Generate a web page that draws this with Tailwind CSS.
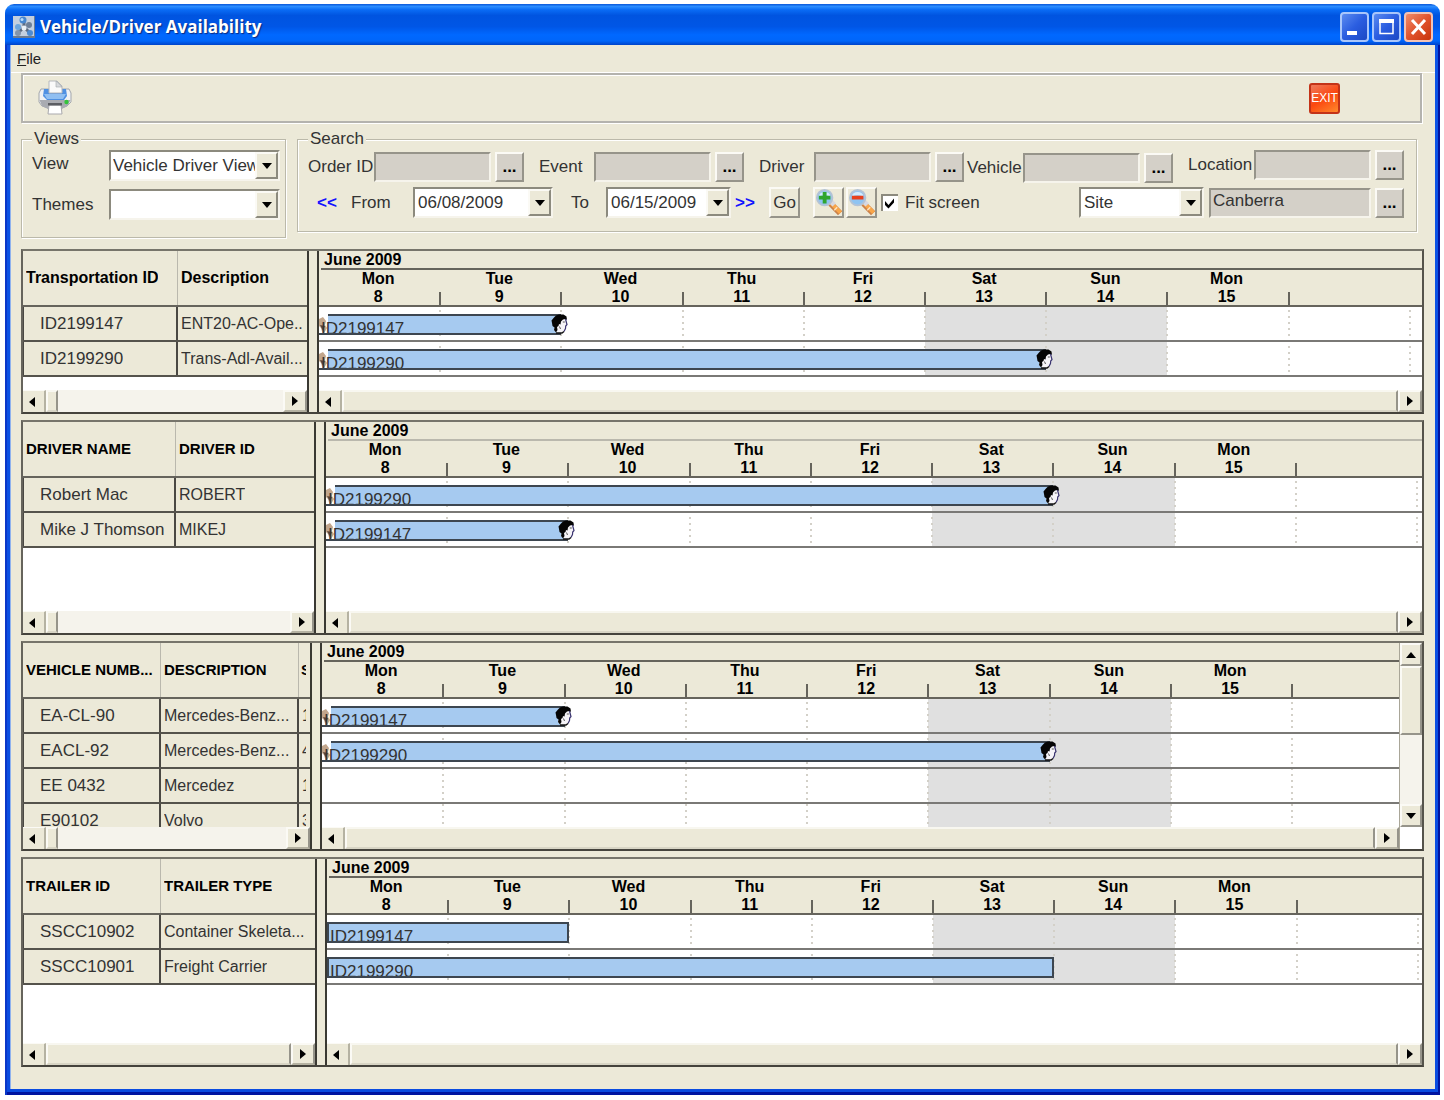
<!DOCTYPE html>
<html lang="en">
<head>
    <meta charset="UTF-8">
    <meta name="viewport" content="width=device-width, initial-scale=1.0">
    <title>Vehicle/Driver Availability</title>
    <script src="https://cdn.jsdelivr.net/npm/@tailwindcss/browser@4"></script>
</head>
<body class="bg-white pt-1 pl-[5px] pr-1 pb-[5px] font-['Liberation_Sans',Arial,sans-serif] text-[17px] leading-5 text-[#333]">

    <!-- Shared icons -->
    <svg class="hidden" aria-hidden="true">
        <symbol id="arrow-left" viewBox="0 0 6 10"><path d="M6 0v10L0 5z" fill="#000"/></symbol>
        <symbol id="arrow-right" viewBox="0 0 6 10"><path d="M0 0v10l6-5z" fill="#000"/></symbol>
        <symbol id="arrow-up" viewBox="0 0 10 6"><path d="M0 6h10L5 0z" fill="#000"/></symbol>
        <symbol id="arrow-down" viewBox="0 0 10 6"><path d="M0 0h10L5 6z" fill="#000"/></symbol>
        <symbol id="driver-head" viewBox="0 0 17 20">
            <path d="M5 3h9l2 5-.5 4-2 3-1 4H6l-3-3z" fill="#f6f4f8"/>
            <path d="M5 1.500 8 .5h4.500l3 2 .5 3.500-1.500-1-2.500.5-2 2-.5 3L8 10l-.5 2L6 13l.5 3L5 18.500 3 16l.5-2.500L1.500 12l-.5-3L.5 6.500 3 3.500z" fill="#050505"/>
            <path d="M14.500 5l.8 3 .7 2.500-1.300 1.500-.2 2.500-1.500 3" fill="none" stroke="#3a3470" stroke-width="1.200"/>
            <path d="M5 19h6l2-1.500" fill="none" stroke="#111" stroke-width="1.400"/>
            <path d="M11.800 8h2M8.500 12.500l1 2.500" stroke="#555" stroke-width="1"/>
        </symbol>
        <symbol id="zoom-base" viewBox="0 0 28 28">
            <path d="M16 15 26 25" stroke="#c9814a" stroke-width="6"/>
            <path d="M16.500 14.500 26.500 24.500" stroke="#f9a64a" stroke-width="4"/>
            <path d="M17 13.500 20 16.500" stroke="#d8d8e0" stroke-width="5"/>
            <path d="M23 19 20 22" stroke="#fde3c0" stroke-width="1.500"/>
            <circle cx="10" cy="9" r="8" fill="#8fc4f2" stroke="#b3c3d6" stroke-width="2"/>
            <path d="M4 8a6 5 0 0 1 12 0c-4-2-8-2-12 0z" fill="#d4ebfc"/>
        </symbol>
    </svg>

    <div class="overflow-hidden rounded-t-[9px]">
        <!-- Title bar -->
        <header class="flex h-[41px] items-center bg-linear-[180deg,#0a57d8_0%,#2b8dff_6%,#0a6cf5_14%,#0054e0_28%,#0056e6_55%,#0068ff_75%,#0066fa_90%,#0043c9_100%] pt-1 pr-[7px] pl-2">
            <svg class="h-[22px] w-[22px] shrink-0" viewBox="0 0 22 22">
                <rect width="22" height="22" fill="#6c7c92"/>
                <rect width="21" height="20" fill="#c3cfdf"/>
                <path d="M5 17l5-5M17 17l-5-5M11 5v7" stroke="#5d6b80" stroke-width="3"/>
                <circle cx="10" cy="4" r="3.500" fill="#4787d0"/>
                <circle cx="9" cy="3.500" r="1.500" fill="#b7dbfa"/>
                <circle cx="5" cy="11" r="3" fill="#6ba5dd"/>
                <circle cx="16" cy="9" r="3" fill="#6d7f98"/>
                <circle cx="5" cy="17" r="3" fill="#8394ab"/>
                <circle cx="17" cy="17" r="3" fill="#4d8bd2"/>
                <circle cx="11" cy="12" r="2.500" fill="#e9eff6"/>
            </svg>
            <h1 class="ml-[5px] flex-1 font-['Open_Sans',sans-serif] text-[17px] font-bold text-white [text-shadow:1px_1px_1px_#0a2a80]">Vehicle/Driver Availability</h1>
            <div class="flex gap-[3px]">
                <button aria-label="Minimize" class="h-[30px] w-[29px] rounded-[4px] border-2 border-[#a9c6fb] bg-linear-[135deg,#5b8bf0,#2a5de0_50%,#1c48c4]">
                    <svg class="h-full w-full" viewBox="0 0 25 26"><rect x="5" y="17" width="10" height="4" fill="#fff"/></svg>
                </button>
                <button aria-label="Maximize" class="h-[30px] w-[29px] rounded-[4px] border-2 border-[#a9c6fb] bg-linear-[135deg,#5b8bf0,#2a5de0_50%,#1c48c4]">
                    <svg class="h-full w-full" viewBox="0 0 25 26"><path d="M6 7.500v12h13v-12" fill="none" stroke="#fff" stroke-width="1.500"/><rect x="5" y="5" width="15" height="4" fill="#fff"/></svg>
                </button>
                <button aria-label="Close" class="h-[30px] w-[29px] rounded-[4px] border-2 border-[#f3c3b5] bg-linear-[135deg,#ef8c6c,#e0532c_50%,#c8340c]">
                    <svg class="h-full w-full" viewBox="0 0 25 26"><path d="M6 6l13 14M19 6 6 20" stroke="#fff" stroke-width="3"/></svg>
                </button>
            </div>
        </header>

        <div class="bg-linear-to-b from-[#0b53e6] to-[#0a4be0] pr-[5px] pb-[6px] pl-[5px] shadow-[inset_2px_0_0_#0a37c8,inset_-2px_-3px_0_#0014a0]">
            <div class="border-l border-[#8fb2ee] bg-[#ece9d8] pb-[22px]">
                <!-- Menu -->
                <nav class="flex h-[28px] items-center border-b border-white pl-[6px]">
                    <a href="#" class="text-[15px] leading-5 text-[#222]"><span class="underline">F</span>ile</a>
                </nav>

                <!-- Toolbar -->
                <div class="mr-[13px] ml-[10px] flex h-[50px] items-center justify-between border-2 border-[#b4b3ae] pr-[80px] pl-[15px] shadow-[inset_1px_1px_0_#fff,1px_1px_0_#fff]">
                    <button aria-label="Print">
                        <svg class="h-[36px] w-[34px]" viewBox="0 0 34 36">
                            <path d="M3 9h28l2 4v9l-4 4-5 2H10l-6-2-3-4v-9z" fill="#f0f1f3" stroke="#a3a7ad"/>
                            <path d="M1.500 20h31l-3 6-6 3H10l-6-3z" fill="#a9abb1"/>
                            <path d="M6 9h22l1 7-3 4H9l-4-4z" fill="#4f90e2"/>
                            <path d="M6 14h22l-3 5H9z" fill="#90bff2"/>
                            <path d="M11 1h8l5 5v7H11z" fill="#fafafa" stroke="#b5b8bd"/>
                            <path d="M18 1v6h6z" fill="#d7d9dc" stroke="#a3a7ad" stroke-width=".6"/>
                            <path d="M11 25h12l1 9H10z" fill="#fff" stroke="#a9a9ad"/>
                            <path d="M10 23h14v2.500H10z" fill="#5b5d63"/>
                            <circle cx="28.500" cy="22" r="2.200" fill="#35c33a"/>
                        </svg>
                    </button>
                    <button class="h-[31px] w-[31px] rounded-[3px] border-2 border-[#c33318] bg-linear-[150deg,#ee7a5c,#fb4710_50%,#ff8a2c] text-[12px] leading-5 text-white"><span class="-mx-1">EXIT</span></button>
                </div>

                <!-- Filters -->
                <div class="mt-[7px] mr-[18px] ml-[10px] flex items-start gap-[11px]">
                    <fieldset class="h-[108px] w-[265px] min-w-0 shrink-0 border border-[#bbb9aa] pr-[5px] pl-[10px] shadow-[inset_1px_1px_0_#fff,1px_1px_0_#fff]">
                        <legend class="bg-[#ece9d8] px-[2px] leading-[18px]">Views</legend>
                        <div class="flex flex-col gap-[8px] pt-[2px]">
                            <div class="flex">
                                <label for="view" class="w-[77px] pt-1">View</label>
                                <div class="flex h-[31px] min-w-0 flex-1 border-2 border-t-[#8c8a7e] border-r-[#f6f4ec] border-b-[#f6f4ec] border-l-[#8c8a7e] bg-white">
                                    <select id="view" class="w-0 min-w-0 flex-1 appearance-none overflow-hidden pl-[2px]"><option>Vehicle Driver View</option></select>
                                    <span class="flex w-[23px] shrink-0 items-center justify-center border-2 border-t-[#fbfaf5] border-r-[#8c8a7e] border-b-[#8c8a7e] border-l-[#fbfaf5] bg-[#ece9d8]"><svg class="h-[6px] w-[10px]"><use href="#arrow-down"/></svg></span>
                                </div>
                            </div>
                            <div class="flex">
                                <label for="themes" class="w-[77px] pt-[6px]">Themes</label>
                                <div class="flex h-[31px] min-w-0 flex-1 border-2 border-t-[#8c8a7e] border-r-[#f6f4ec] border-b-[#f6f4ec] border-l-[#8c8a7e] bg-white">
                                    <select id="themes" class="w-0 min-w-0 flex-1 appearance-none pl-[2px]"><option></option></select>
                                    <span class="flex w-[23px] shrink-0 items-center justify-center border-2 border-t-[#fbfaf5] border-r-[#8c8a7e] border-b-[#8c8a7e] border-l-[#fbfaf5] bg-[#ece9d8]"><svg class="h-[6px] w-[10px]"><use href="#arrow-down"/></svg></span>
                                </div>
                            </div>
                        </div>
                    </fieldset>

                    <fieldset class="h-[102px] min-w-0 flex-1 border border-[#bbb9aa] pr-[12px] pl-[10px] shadow-[inset_1px_1px_0_#fff,1px_1px_0_#fff]">
                        <legend class="bg-[#ece9d8] px-[2px] leading-[18px]">Search</legend>
                        <div class="flex flex-col gap-1 pt-[2px]">
                            <div class="flex h-[33px] items-center">
                                <div class="flex items-center">
                                    <label for="order" class="w-[66px] whitespace-nowrap">Order ID</label>
                                    <input id="order" type="text" class="h-[30px] w-[117px] border-2 border-t-[#96948a] border-r-[#f6f4ec] border-b-[#f6f4ec] border-l-[#96948a] bg-[#d4d0c8] px-[2px]">
                                    <button aria-label="Choose order" class="ml-1 flex h-[30px] w-[29px] items-end justify-center border-2 border-t-[#fbfaf5] border-r-[#96948a] border-b-[#96948a] border-l-[#fbfaf5] bg-[#d4d0c8] pb-[3px] font-bold text-black">...</button>
                                </div>
                                <div class="ml-[15px] flex items-center">
                                    <label for="event" class="w-[55px]">Event</label>
                                    <input id="event" type="text" class="h-[30px] w-[117px] border-2 border-t-[#96948a] border-r-[#f6f4ec] border-b-[#f6f4ec] border-l-[#96948a] bg-[#d4d0c8] px-[2px]">
                                    <button aria-label="Choose event" class="ml-1 flex h-[30px] w-[29px] items-end justify-center border-2 border-t-[#fbfaf5] border-r-[#96948a] border-b-[#96948a] border-l-[#fbfaf5] bg-[#d4d0c8] pb-[3px] font-bold text-black">...</button>
                                </div>
                                <div class="ml-[15px] flex items-center">
                                    <label for="driver" class="w-[55px]">Driver</label>
                                    <input id="driver" type="text" class="h-[30px] w-[117px] border-2 border-t-[#96948a] border-r-[#f6f4ec] border-b-[#f6f4ec] border-l-[#96948a] bg-[#d4d0c8] px-[2px]">
                                    <button aria-label="Choose driver" class="ml-1 flex h-[30px] w-[29px] items-end justify-center border-2 border-t-[#fbfaf5] border-r-[#96948a] border-b-[#96948a] border-l-[#fbfaf5] bg-[#d4d0c8] pb-[3px] font-bold text-black">...</button>
                                </div>
                                <div class="ml-[3px] flex items-center self-end">
                                    <label for="vehicle" class="w-[56px]">Vehicle</label>
                                    <input id="vehicle" type="text" class="h-[30px] w-[117px] border-2 border-t-[#96948a] border-r-[#f6f4ec] border-b-[#f6f4ec] border-l-[#96948a] bg-[#d4d0c8] px-[2px]">
                                    <button aria-label="Choose vehicle" class="ml-1 flex h-[30px] w-[29px] items-end justify-center border-2 border-t-[#fbfaf5] border-r-[#96948a] border-b-[#96948a] border-l-[#fbfaf5] bg-[#d4d0c8] pb-[3px] font-bold text-black">...</button>
                                </div>
                                <div class="ml-auto flex items-center self-start">
                                    <label for="location" class="w-[66px]">Location</label>
                                    <input id="location" type="text" class="h-[30px] w-[117px] border-2 border-t-[#96948a] border-r-[#f6f4ec] border-b-[#f6f4ec] border-l-[#96948a] bg-[#d4d0c8] px-[2px]">
                                    <button aria-label="Choose location" class="ml-1 flex h-[30px] w-[29px] items-end justify-center border-2 border-t-[#fbfaf5] border-r-[#96948a] border-b-[#96948a] border-l-[#fbfaf5] bg-[#d4d0c8] pb-[3px] font-bold text-black">...</button>
                                </div>
                            </div>

                            <div class="flex h-[31px] items-center">
                                <button aria-label="Earlier" class="ml-[9px] w-[34px] text-left font-bold text-[#1414ff]">&lt;&lt;</button>
                                <label for="from" class="w-[62px]">From</label>
                                <div class="flex h-[31px] w-[140px] border-2 border-t-[#8c8a7e] border-r-[#f6f4ec] border-b-[#f6f4ec] border-l-[#8c8a7e] bg-white">
                                    <input id="from" type="text" value="06/08/2009" class="min-w-0 flex-1 pl-[3px]">
                                    <button aria-label="Pick from date" class="flex w-[23px] items-center justify-center border-2 border-t-[#fbfaf5] border-r-[#8c8a7e] border-b-[#8c8a7e] border-l-[#fbfaf5] bg-[#ece9d8]"><svg class="h-[6px] w-[10px]"><use href="#arrow-down"/></svg></button>
                                </div>
                                <label for="to" class="ml-[18px] w-[35px]">To</label>
                                <div class="flex h-[31px] w-[125px] border-2 border-t-[#8c8a7e] border-r-[#f6f4ec] border-b-[#f6f4ec] border-l-[#8c8a7e] bg-white">
                                    <input id="to" type="text" value="06/15/2009" class="min-w-0 flex-1 pl-[3px]">
                                    <button aria-label="Pick to date" class="flex w-[23px] items-center justify-center border-2 border-t-[#fbfaf5] border-r-[#8c8a7e] border-b-[#8c8a7e] border-l-[#fbfaf5] bg-[#ece9d8]"><svg class="h-[6px] w-[10px]"><use href="#arrow-down"/></svg></button>
                                </div>
                                <button aria-label="Later" class="ml-1 w-[34px] text-left font-bold text-[#1414ff]">&gt;&gt;</button>
                                <button class="h-[31px] w-[31px] border-2 border-t-[#fbfaf5] border-r-[#96948a] border-b-[#96948a] border-l-[#fbfaf5]">Go</button>
                                <button aria-label="Zoom in" class="ml-[13px] h-[31px] w-[31px] border-2 border-t-[#fbfaf5] border-r-[#96948a] border-b-[#96948a] border-l-[#fbfaf5]">
                                    <svg class="h-full w-full" viewBox="0 0 28 28"><use href="#zoom-base" width="28" height="28"/><path d="M10 3v12M4 9h12" stroke="#2fa52f" stroke-width="4"/></svg>
                                </button>
                                <button aria-label="Zoom out" class="ml-[2px] h-[31px] w-[31px] border-2 border-t-[#fbfaf5] border-r-[#96948a] border-b-[#96948a] border-l-[#fbfaf5]">
                                    <svg class="h-full w-full" viewBox="0 0 28 28"><use href="#zoom-base" width="28" height="28"/><path d="M4 9h12" stroke="#e8401c" stroke-width="4"/></svg>
                                </button>
                                <label class="ml-1 flex items-center gap-[7px] whitespace-nowrap">
                                    <input type="checkbox" checked class="peer sr-only">
                                    <svg class="h-[17px] w-[17px]" viewBox="0 0 17 17"><rect width="17" height="17" fill="#fff"/><path d="M1 17V1h16" fill="none" stroke="#8c8a7e" stroke-width="2"/><path d="M4 7l3.500 4L13 4.500v4L7.500 14.500 4 11z" fill="#000"/></svg>
                                    Fit screen
                                </label>
                                <div class="ml-auto flex h-[31px] w-[125px] border-2 border-t-[#8c8a7e] border-r-[#f6f4ec] border-b-[#f6f4ec] border-l-[#8c8a7e] bg-white">
                                    <select aria-label="Location type" class="min-w-0 flex-1 appearance-none pl-[3px]"><option>Site</option></select>
                                    <span class="flex w-[23px] items-center justify-center border-2 border-t-[#fbfaf5] border-r-[#8c8a7e] border-b-[#8c8a7e] border-l-[#fbfaf5] bg-[#ece9d8]"><svg class="h-[6px] w-[10px]"><use href="#arrow-down"/></svg></span>
                                </div>
                                <input aria-label="Site name" type="text" value="Canberra" class="ml-[5px] h-[30px] w-[162px] border-2 border-t-[#96948a] border-r-[#f6f4ec] border-b-[#f6f4ec] border-l-[#96948a] bg-[#d4d0c8] px-[2px] pb-[3px]">
                                <button aria-label="Choose site" class="ml-1 flex h-[30px] w-[29px] items-end justify-center border-2 border-t-[#fbfaf5] border-r-[#96948a] border-b-[#96948a] border-l-[#fbfaf5] bg-[#d4d0c8] pb-[3px] font-bold text-black">...</button>
                            </div>
                        </div>
                    </fieldset>
                </div>

                <!-- Resource panels -->
                <main id="panels" class="mt-[11px] mr-[11px] ml-[10px] flex flex-col gap-[6px]"></main>
            </div>
        </div>
    </div>

    <script>
        const days = [['Mon', 8], ['Tue', 9], ['Wed', 10], ['Thu', 11], ['Fri', 12], ['Sat', 13], ['Sun', 14], ['Mon', 15]];

        // span = how many days fit into the visible width of the chart
        const panels = [
            {
                height: 'h-[165px]', left: 'w-[284px]', span: 9.1, monthLine: 'border-[#66645c]',
                head: 'text-[16px]', cols: ['w-[155px]', ''],
                columns: ['Transportation ID', 'Description'],
                rows: [['ID2199147', 'ENT20-AC-Ope..'], ['ID2199290', 'Trans-Adl-Avail...']],
                bars: [['ID2199147', 2], ['ID2199290', 6]], heads: true, thumb: 'w-[12px]'
            },
            {
                height: 'h-[215px]', left: 'w-[291px]', span: 9.04, monthLine: 'border-[#bab8ad]',
                head: 'text-[15px]', cols: ['w-[153px]', ''],
                columns: ['DRIVER NAME', 'DRIVER ID'],
                rows: [['Robert Mac', 'ROBERT'], ['Mike J Thomson', 'MIKEJ']],
                bars: [['ID2199290', 6], ['ID2199147', 2]], heads: true, thumb: 'w-[12px]'
            },
            {
                height: 'h-[210px]', left: 'w-[287px]', span: 8.88, monthLine: 'border-[#66645c]',
                head: 'text-[15px]', cols: ['w-[138px]', 'w-[138px]', ''],
                columns: ['VEHICLE NUMB...', 'DESCRIPTION', 'S'],
                rows: [['EA-CL-90', 'Mercedes-Benz...', '1'], ['EACL-92', 'Mercedes-Benz...', '4'], ['EE 0432', 'Mercedez', '1'], ['E90102', 'Volvo', '3']],
                bars: [['ID2199147', 2], ['ID2199290', 6], null, null], heads: true, thumb: 'w-[12px]', vscroll: true
            },
            {
                height: 'h-[210px]', left: 'w-[292px]', span: 9.035, monthLine: 'border-[#66645c]',
                head: 'text-[15px]', cols: ['w-[138px]', ''],
                columns: ['TRAILER ID', 'TRAILER TYPE'],
                rows: [['SSCC10902', 'Container Skeleta...'], ['SSCC10901', 'Freight Carrier']],
                bars: [['ID2199147', 2], ['ID2199290', 6]], heads: false, thumb: 'flex-1'
            }
        ];

        function scrollbar(thumb) {
            return `
                <div class="flex h-[22px] shrink-0 bg-[#f5f3ec]">
                    <button aria-label="Scroll left" class="flex w-[23px] shrink-0 items-center justify-center border-t border-r-2 border-t-[#fbfaf5] border-r-[#b5b2a2] bg-[#ece9d8] pr-1"><svg class="h-[10px] w-[6px]"><use href="#arrow-left"/></svg></button>
                    <div class="${thumb} border-2 border-t-[#f8f7f0] border-r-[#96948a] border-b-[#d8d5c5] border-l-[#fbfaf5] bg-[#ece9d8]"></div>
                    <button aria-label="Scroll right" class="ml-auto flex w-[24px] shrink-0 items-center justify-center border-2 border-t-[#fbfaf5] border-r-[#96948a] border-b-[#b5b2a2] border-l-[#fbfaf5] bg-[#ece9d8]"><svg class="h-[10px] w-[6px]"><use href="#arrow-right"/></svg></button>
                </div>`;
        }

        function resourceTable(p) {
            const last = p.columns.length - 1;
            const head = p.columns.map((c, i) => `
                <th class="${p.cols[i]} h-[56px] overflow-hidden border-b-2 border-[#66645c] bg-[#ece9d8] p-0 text-left">
                    <div class="flex h-[54px] items-center ${i < last ? 'border-r border-[#bab8ad]' : ''} ${i === 2 ? 'pr-[4px] pl-[2px]' : 'pl-[3px]'}"><span class="overflow-hidden">${c}</span></div>
                </th>`).join('');
            const body = p.rows.map(r => `<tr>${r.map((c, i) => `
                <td class="h-[35px] overflow-hidden border-b-2 border-[#55534c] bg-[#ece9d8] p-0">
                    <div class="flex h-[33px] items-center ${i < last ? 'border-r-2' : ''} border-[#4a4843] ${i === 0 ? 'border-l pl-[16px]' : 'pl-[3px] text-[16px]'} ${i === 2 ? 'pr-[4px]' : ''}"><span class="overflow-hidden">${c}</span></div>
                </td>`).join('')}</tr>`).join('');
            return `
                <table class="w-full table-fixed border-separate border-spacing-0 whitespace-nowrap">
                    <thead class="${p.head} font-bold text-black"><tr>${head}</tr></thead>
                    <tbody>${body}</tbody>
                </table>`;
        }

        function bar(b, p) {
            if (!b) return '';
            const width = b[1] / p.span * 100;
            if (!p.heads) {
                return `<div class="absolute top-[7px] left-0 h-[21px] overflow-hidden border-2 border-[#3d4650] bg-[#a6caf0] pt-[3px] pl-[1px]" style="width:${width}%">${b[0]}</div>`;
            }
            return `
                <div class="absolute top-[7px] left-0 h-[21px]" style="width:${width}%">
                    <div class="relative h-full overflow-hidden border-b-2 border-[#3d4650] bg-white">
                        <div class="ml-[9px] h-full border-t-2 border-[#3d4650] bg-[#a6caf0]"></div>
                        <svg class="absolute top-[3px] left-0 h-[18px] w-[8px]" viewBox="0 0 8 18"><path d="M0 2 4 0l3 4-1 4 2 3-4 7-2-7-2-2z" fill="#c2a68c"/><path d="M1 8l5 1-2 5z" fill="#5c4638"/></svg>
                        <span class="absolute top-[5px] left-[2px]">${b[0]}</span>
                    </div>
                    <svg class="absolute top-0 -right-[7px] h-[20px] w-[17px]"><use href="#driver-head"/></svg>
                </div>`;
        }

        function chart(p) {
            const day = 100 / p.span;
            const labels = days.map(d => `
                <div class="relative shrink-0 pr-[3px] text-center leading-[18px]" style="width:${day}%">
                    ${d[0]}<br>${d[1]}
                    <span class="absolute right-0 bottom-0 h-[13px] w-[2px] translate-x-1/2 bg-[#66645c]"></span>
                </div>`).join('');
            const lines = [1, 2, 3, 4, 5, 6, 7, 8, 9].filter(n => n < p.span).map(n =>
                `<span class="absolute inset-y-0 w-[2px] -translate-x-1/2 bg-[repeating-linear-gradient(180deg,transparent_0_3px,#d3d0c8_3px_5px,transparent_5px_6px)]" style="left:${n * day}%"></span>`).join('');
            const rows = p.bars.map(b => `<div class="relative h-[35px] border-b-2 border-[#7a7976]">${bar(b, p)}</div>`).join('');
            return `
                <div class="flex min-w-0 flex-1 flex-col">
                    <div class="shrink-0 bg-[#ece9d8] text-[16px] font-bold text-black">
                        <div class="ml-[2px] h-[19px] border-b-2 ${p.monthLine} pl-[3px] leading-[18px]">June 2009</div>
                        <div class="flex h-[37px] overflow-hidden border-b-2 border-[#66645c]">${labels}</div>
                    </div>
                    <div class="min-h-0 flex-1 overflow-hidden">
                        <div class="relative">
                            <span class="absolute inset-y-0 bg-[#e0e0e0]" style="left:${5 * day}%;width:${2 * day}%"></span>
                            ${lines}
                            ${rows}
                        </div>
                    </div>
                    ${scrollbar('flex-1')}
                </div>`;
        }

        function verticalScrollbar() {
            return `
                <div class="flex w-[23px] shrink-0 flex-col border-l border-[#a9a698] bg-[#f5f3ec]">
                    <button aria-label="Scroll up" class="flex h-[23px] items-center justify-center border-2 border-t-[#fbfaf5] border-r-[#96948a] border-b-[#96948a] border-l-[#fbfaf5] bg-[#ece9d8]"><svg class="h-[6px] w-[10px]"><use href="#arrow-up"/></svg></button>
                    <div class="h-[69px] border-2 border-t-[#fbfaf5] border-r-[#96948a] border-b-[#96948a] border-l-[#fbfaf5] bg-[#ece9d8]"></div>
                    <button aria-label="Scroll down" class="mt-auto flex h-[23px] items-center justify-center border-2 border-t-[#fbfaf5] border-r-[#96948a] border-b-[#96948a] border-l-[#fbfaf5] bg-[#ece9d8]"><svg class="h-[6px] w-[10px]"><use href="#arrow-down"/></svg></button>
                    <div class="h-[22px] bg-white"></div>
                </div>`;
        }

        document.getElementById('panels').innerHTML = panels.map(p => `
            <section class="${p.height} flex border-2 border-t-[#77756b] border-r-[#55534b] border-b-[#45433c] border-l-[#66645c] bg-white">
                <div class="${p.left} flex shrink-0 flex-col">
                    <div class="min-h-0 flex-1 overflow-hidden">${resourceTable(p)}</div>
                    ${scrollbar(p.thumb)}
                </div>
                <div class="w-[12px] shrink-0 cursor-col-resize border-x-2 border-[#3a3933] bg-[#ece9d8]"></div>
                ${chart(p)}
                ${p.vscroll ? verticalScrollbar() : ''}
            </section>`).join('');
    </script>
</body>
</html>
